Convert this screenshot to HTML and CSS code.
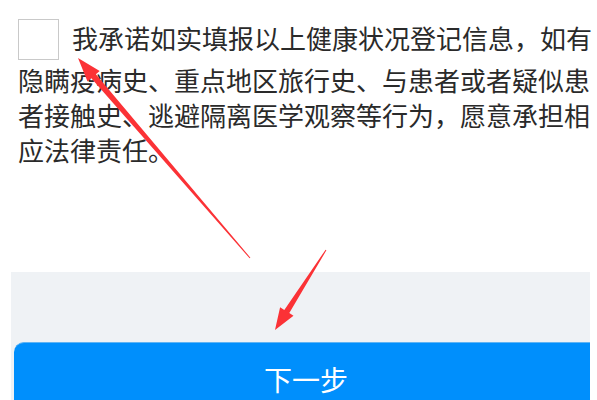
FILE: index.html
```html
<!DOCTYPE html>
<html lang="zh-CN">
<head>
    <meta charset="UTF-8">
    <meta name="viewport" content="width=device-width, initial-scale=1.0">
    <title>健康状况登记</title>
    <link rel="stylesheet" href="styles.css">
</head>
<body>

    <div class="agreement">
        <p class="agree-text"><span class="checkbox"></span>我承诺如实填报以上健康状况登记信息，如有隐瞒疫病史、重点地区旅行史、与患者或者疑似患者接触史、逃避隔离医学观察等行为，愿意承担相应法律责任。</p>
    </div>

    <div class="footer">
        <button class="next-btn">下一步</button>
    </div>

    <!-- annotation arrows -->
    <svg class="arrows" width="597" height="400" viewBox="0 0 597 400">
        <polygon points="250.4,257.7 95.9,74.2 99.7,71 78,58 87.5,81.4 91.3,78.2 249.6,258.3" />
        <polygon points="326.4,250.3 289.3,313.1 293.5,315.8 275,330 280.1,307.2 284.3,309.9 325.6,249.7" />
    </svg>

</body>
</html>
```

FILE: styles.css
```css
body {
  margin: 0;
  background-color: white;
  font-family: "Noto Sans CJK SC", "Noto Sans", sans-serif;
  position: relative;
  overflow: hidden;
}

.agreement {
  height: 272px;
  box-sizing: border-box;
  padding: 20px 5px 0 18px;
}

.agree-text {
  margin: 0;
  font-size: 26px;
  line-height: 35px;
  color: #2a2a2a;
}

.checkbox {
  display: inline-block;
  width: 39px;
  height: 39px;
  border: 1px solid #c9c9c9;
  margin-right: 13px;
  vertical-align: middle;
  position: relative;
  top: -2px;
}

.footer {
  background-color: #eff2f5;
  margin: 0 7px 0 11px;
  padding: 70px 0 0 3px;
}

.next-btn {
  display: block;
  width: 100%;
  height: 72px;
  border: none;
  border-top: 1px solid #5fb4f4;
  border-radius: 10px 0 0 0;
  background-color: #008ffc;
  color: white;
  font-family: "Noto Sans CJK SC", sans-serif;
  font-size: 28px;
  padding: 0 0 0 8px;
}

.arrows {
  position: absolute;
  left: 0;
  top: 0;
  pointer-events: none;
}

.arrows polygon {
  fill: #fb3236;
}
```
